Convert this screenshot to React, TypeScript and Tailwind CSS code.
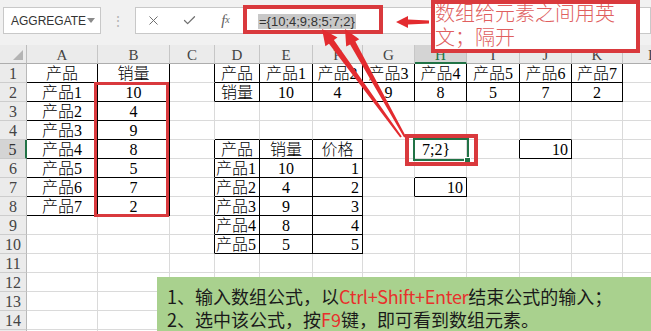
import { X, Check } from 'lucide-react'

type Pt = [number, number]
type Align = 'l' | 'c' | 'r'

const LETTERS = ['', 'A', 'B', 'C', 'D', 'E', 'F', 'G', 'H', 'I', 'J', 'K', 'L']
const ROWS = 15

// bordered ranges: [r1, c1, r2, c2]
const boxes = [
  [1, 1, 8, 2],
  [1, 4, 2, 11],
  [5, 4, 10, 6],
  [7, 8, 7, 8],
  [5, 10, 5, 10],
]

const isBlack = (r: number, c: number) =>
  boxes.some(([r1, c1, r2, c2]) => r >= r1 && r <= r2 && c >= c1 && c <= c2)

const cells: Record<string, [string, Align]> = {}
const put = (r: number, c: number, text: string | number, a: Align) => {
  cells[`${r},${c}`] = [String(text), a]
}

// A1:B8
put(1, 1, '产品', 'c')
put(1, 2, '销量', 'c')
;[10, 4, 9, 8, 5, 7, 2].forEach((v, i) => {
  put(i + 2, 1, `产品${i + 1}`, 'c')
  put(i + 2, 2, v, 'c')
})

// D1:K2
put(1, 4, '产品', 'c')
put(2, 4, '销量', 'c')
;[10, 4, 9, 8, 5, 7, 2].forEach((v, i) => {
  put(1, i + 5, `产品${i + 1}`, 'c')
  put(2, i + 5, v, 'c')
})

// D5:F10
put(5, 4, '产品', 'c')
put(5, 5, '销量', 'c')
put(5, 6, '价格', 'c')
;[10, 4, 9, 8, 5].forEach((v, i) => {
  put(i + 6, 4, `产品${i + 1}`, 'l')
  put(i + 6, 5, v, 'c')
  put(i + 6, 6, i + 1, 'r')
})

put(5, 8, '7;2}', 'l')
put(5, 10, 10, 'r')
put(7, 8, 10, 'r')

function arrowPoints(tip: Pt, tail: Pt, headLen: number, headW: number, w0: number, w1: number) {
  const dx = tail[0] - tip[0]
  const dy = tail[1] - tip[1]
  const len = Math.hypot(dx, dy)
  const ux = dx / len
  const uy = dy / len
  const nx = -uy
  const ny = ux
  const bx = tip[0] + ux * headLen
  const by = tip[1] + uy * headLen
  const pts: Pt[] = [
    tip,
    [bx + (nx * headW) / 2, by + (ny * headW) / 2],
    [bx + (nx * w0) / 2, by + (ny * w0) / 2],
    [tail[0] + (nx * w1) / 2, tail[1] + (ny * w1) / 2],
    [tail[0] - (nx * w1) / 2, tail[1] - (ny * w1) / 2],
    [bx - (nx * w0) / 2, by - (ny * w0) / 2],
    [bx - (nx * headW) / 2, by - (ny * headW) / 2],
  ]
  return pts.map(p => p.map(n => n.toFixed(1)).join(',')).join(' ')
}

function Toolbar() {
  return (
    <div className="h-[45px] bg-[#f1f1f1] flex items-start pt-[7px] font-['Liberation_Sans',sans-serif]">
      {/* Name box */}
      <div className="ml-[3px] w-[98px] h-[27px] bg-white border border-[#c8c8c8] flex items-center justify-between pl-[7px] pr-[5px]">
        <span className="text-[12px] text-[#333]">AGGREGATE</span>
        <svg width="8" height="5" viewBox="0 0 8 5">
          <polygon points="0,0 8,0 4,5" fill="#8a8a8a" />
        </svg>
      </div>
      <div className="w-[34px] h-[27px] flex items-center justify-center text-[#b5b5b5] text-[14px] leading-none">⋮</div>
      {/* Formula bar */}
      <div className="flex-1 h-[27px] bg-white border border-[#c8c8c8] flex items-center">
        <div className="w-[35px] flex justify-center">
          <X size={15} strokeWidth={1.6} color="#707070" />
        </div>
        <div className="w-[36px] flex justify-center">
          <Check size={15} strokeWidth={2} color="#707070" />
        </div>
        <div className="w-[37px] flex justify-center font-['Liberation_Serif',serif] italic text-[15px] text-[#606060] leading-none">
          f<span className="text-[10px] relative top-[2px]">x</span>
        </div>
        <div className="pl-[14px]">
          <span className="bg-[#c8c8c8] text-[13px] text-[#333] px-[1px] leading-[16px]">={'{'}10;4;9;8;5;7;2{'}'}</span>
        </div>
      </div>
    </div>
  )
}

function Grid() {
  const rows = []
  // header row
  rows.push(
    <div key="corner" className="bg-[#ebebeb] border-r border-b border-r-[#bdbdbd] border-b-[#adadad] relative">
      <svg className="absolute right-[3px] bottom-[3px]" width="10" height="10" viewBox="0 0 10 10">
        <polygon points="10,0 10,10 0,10" fill="#b4b4b4" />
      </svg>
    </div>
  )
  for (let c = 1; c < LETTERS.length; c++) {
    const sel = c === 8
    rows.push(
      <div
        key={`h${c}`}
        className={
          sel
            ? 'bg-[#d4d4d4] border-r border-b-2 border-r-[#c2c2c2] border-b-[#217346] text-[#217346] text-center text-[15px] leading-[20px]'
            : 'bg-[#ebebeb] border-r border-b border-r-[#c6c6c6] border-b-[#adadad] text-[#444] text-center text-[15px] leading-[20px]'
        }
      >
        {LETTERS[c]}
      </div>
    )
  }
  for (let r = 1; r <= ROWS; r++) {
    const sel = r === 5
    rows.push(
      <div
        key={`r${r}`}
        className={
          sel
            ? 'bg-[#d4d4d4] border-r-2 border-b border-r-[#217346] border-b-[#c8c8c8] text-[#333] text-center text-[16px] leading-[19px]'
            : 'bg-[#ebebeb] border-r border-b border-r-[#b8b8b8] border-b-[#cdcdcd] text-[#444] text-center text-[16px] leading-[19px]'
        }
      >
        {r}
      </div>
    )
    for (let c = 1; c < LETTERS.length; c++) {
      const right = isBlack(r, c) || isBlack(r, c + 1)
      const bottom = isBlack(r, c) || isBlack(r + 1, c)
      const cell = cells[`${r},${c}`]
      const align = !cell
        ? ''
        : r === 5 && c === 8
        ? 'text-left pl-[7px]'
        : cell[1] === 'l'
        ? 'text-left pl-[1px]'
        : cell[1] === 'r'
        ? 'text-right pr-[3px]'
        : 'text-center'
      rows.push(
        <div
          key={`${r}-${c}`}
          className={`border-r border-b whitespace-nowrap overflow-hidden text-[16px] font-light leading-[19px] text-black ${
            right ? 'border-r-black' : 'border-r-[#dadada]'
          } ${bottom ? 'border-b-black' : 'border-b-[#dadada]'} ${align}`}
        >
          {cell ? cell[0] : ''}
        </div>
      )
    }
  }
  return (
    <div className="grid grid-cols-[27px_71px_72px_45px_45px_53px_50px_52px_52px_53px_52px_51px_60px] auto-rows-[19px] font-['Liberation_Serif','Noto_Sans_CJK_SC',serif]">
      {rows}
    </div>
  )
}

export default function App() {
  return (
    <div className="relative w-[651px] h-[331px] overflow-hidden bg-white">
      <Toolbar />
      <Grid />

      {/* selection on H5 */}
      <div className="absolute left-[413px] top-[138px] w-[56px] h-[23px] border-2 border-[#217346]" />
      <div className="absolute left-[464px] top-[157px] w-[7px] h-[7px] bg-[#217346] border border-white" />

      {/* red highlight boxes */}
      <div className="absolute left-[94px] top-[82px] w-[75px] h-[135px] border-[3px] border-[#d9393d]" />
      <div className="absolute left-[405px] top-[134px] w-[73px] h-[32px] border-4 border-[#d9393d]" />
      <div className="absolute left-[243px] top-[5px] w-[140px] h-[29px] border-4 border-[#d9393d]" />

      {/* arrows */}
      <svg className="absolute left-0 top-0 pointer-events-none" width="651" height="331" viewBox="0 0 651 331">
        <polygon points={arrowPoints([396, 22], [429, 22], 12, 12, 5, 3)} fill="#e32b2f" />
        <polygon points={arrowPoints([322, 29], [401, 137], 16, 15, 6, 2)} fill="#e32b2f" />
        <polygon points={arrowPoints([345, 29], [405, 137], 16, 15, 6, 2)} fill="#e32b2f" />
      </svg>

      {/* note box */}
      <div className="absolute left-[431px] top-0 w-[209px] h-[53px] border-4 border-[#d9393d] bg-white overflow-hidden">
        <div className="-mt-[3px] text-[20px] font-light leading-[24px] text-[#e05f5f] font-['Noto_Sans_CJK_SC',sans-serif] whitespace-nowrap">
          数组给元素之间用英
          <br />
          文；隔开
        </div>
      </div>

      {/* green text box */}
      <div className="absolute left-[157px] top-[277px] w-[494px] h-[54px] bg-[#a9d18e] pl-[10px] pt-[8px] text-[18px] leading-[23px] text-[#1a1a1a] font-['Noto_Sans_CJK_SC',sans-serif] whitespace-nowrap">
        <div>
          1、输入数组公式，以<span className="text-[#e8302c] tracking-[-0.3px]">Ctrl+Shift+Enter</span>结束公式的输入；
        </div>
        <div>
          2、选中该公式，按<span className="text-[#e8302c]">F9</span>键，即可看到数组元素。
        </div>
      </div>
    </div>
  )
}
